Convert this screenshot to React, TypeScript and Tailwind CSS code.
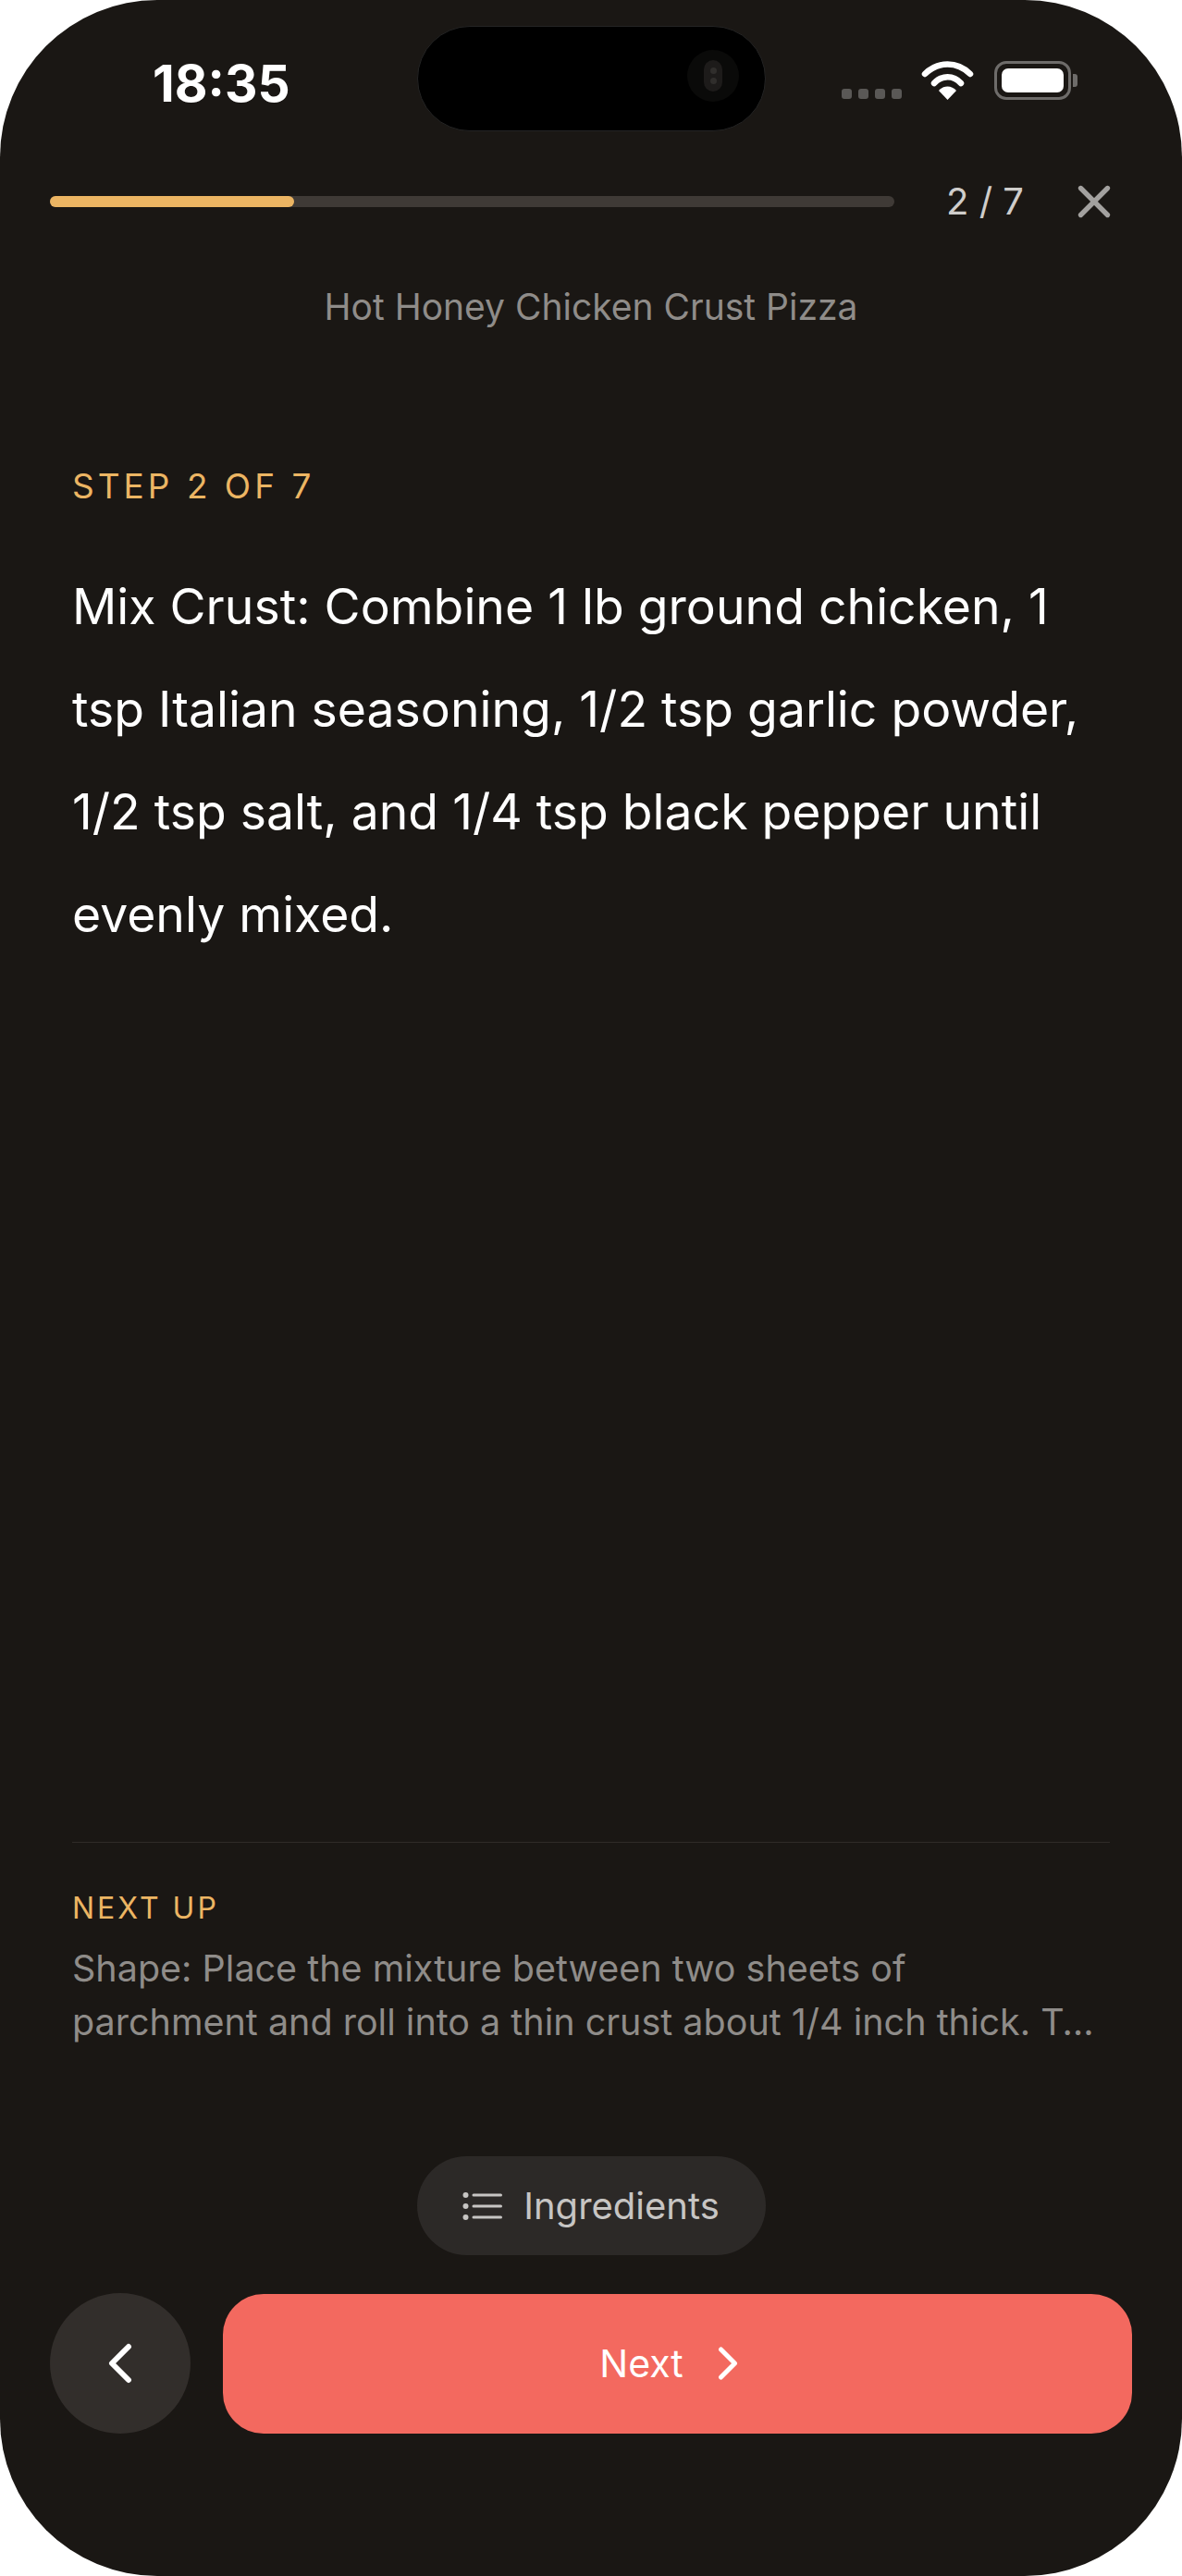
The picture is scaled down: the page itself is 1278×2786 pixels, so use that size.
import { ChevronLeft, ChevronRight, X } from "lucide-react";

const font = "font-['Inter','Noto_Sans',sans-serif]";

function StatusIcons() {
  return (
    <div className="flex items-end">
      <div className="flex gap-[7px] mb-[1px]">
        {[0, 1, 2, 3].map((d) => (
          <div key={d} className="w-[11px] h-[11px] rounded-[3px] bg-[#5a5856]" />
        ))}
      </div>
      <svg className="ml-[21px]" width="57" height="42" viewBox="0 0 57 42" fill="none">
        <path d="M4 14 C18 0 39 0 53 14" stroke="#fff" strokeWidth="6.5" strokeLinecap="round" />
        <path d="M14 24 C22 15 35 15 43 24" stroke="#fff" strokeWidth="6.5" strokeLinecap="round" />
        <path d="M19 32 C24 26 33 26 38 32 L28.5 42 Z" fill="#fff" />
      </svg>
      <div className="ml-[22px] flex items-center">
        <div className="w-[83px] h-[42px] rounded-[13px] border-[3px] border-[#6e6c6a] p-[5px]">
          <div className="w-full h-full rounded-[7px] bg-white" />
        </div>
        <div className="w-[5px] h-[14px] rounded-r-[3px] bg-[#6e6c6a] ml-[2px]" />
      </div>
    </div>
  );
}

function ListIcon() {
  return (
    <svg width="43" height="32" viewBox="0 0 43 32" fill="none" stroke="currentColor" strokeWidth="3" strokeLinecap="round">
      <circle cx="3.5" cy="4" r="3" fill="currentColor" stroke="none" />
      <circle cx="3.5" cy="16" r="3" fill="currentColor" stroke="none" />
      <circle cx="3.5" cy="28" r="3" fill="currentColor" stroke="none" />
      <path d="M12 4H41.5M12 16H41.5M12 28H41.5" />
    </svg>
  );
}

export default function App() {
  return (
    <div className="bg-white w-[1278px] h-[2786px]">
      <div className={`relative flex flex-col w-full h-full rounded-[170px] overflow-hidden bg-[#1a1714] ${font}`}>
        {/* dynamic island */}
        <div className="absolute left-[451px] top-[28px] w-[377px] h-[114px] rounded-[57px] bg-black border border-[#242424]">
          <div className="absolute left-[291px] top-[25px] w-[56px] h-[56px] rounded-full bg-[#0a0a09] flex items-center justify-center">
            <div className="w-[20px] h-[34px] rounded-full bg-[#1d1b1a] flex flex-col items-center justify-center gap-[4px]">
              <div className="w-[7px] h-[7px] rounded-full bg-[#302e2c]" />
              <div className="w-[7px] h-[7px] rounded-full bg-[#302e2c]" />
            </div>
          </div>
        </div>

        <div className="flex justify-between items-start pt-[66px] pl-[165px] pr-[113px] h-[198px]">
          <div className="font-bold text-[55px] leading-[48px] text-white">18:35</div>
          <StatusIcons />
        </div>

        <div className="flex items-center pl-[54px] h-[40px]">
          <div className="w-[913px] h-[12px] shrink-0 rounded-full bg-[#3f3a36]">
            <div className="w-[264px] h-full rounded-full bg-[#ecb563]" />
          </div>
          <div className="ml-[56px] shrink-0 whitespace-nowrap text-[40px] leading-none text-[#cfcdcb]">2 / 7</div>
          <X className="ml-[47px] shrink-0 text-[#a3a19f]" size={58} strokeWidth={2.2} />
        </div>

        <div className="mt-[69px] text-center text-[39px] leading-[50px] text-[#8f8c89]">Hot Honey Chicken Crust Pizza</div>

        <div className="px-[78px] mt-[144px] flex-1 flex flex-col">
          <div className="text-[37px] leading-[50px] tracking-[4px] text-[#ecb563]">STEP 2 OF 7</div>
          <div className="mt-[49px] text-[53.5px] leading-[111px] text-white">
            Mix Crust: Combine 1 lb ground chicken, 1 tsp Italian seasoning, 1/2 tsp garlic powder, 1/2 tsp salt, and 1/4 tsp black pepper until evenly mixed.
          </div>
        </div>

        <div className="mx-[78px] border-t border-[#2f2b28] pt-[49px]">
          <div className="text-[32px] leading-[44px] tracking-[3px] text-[#ecb563]">NEXT UP</div>
          <div className="mt-[14px] text-[39.5px] leading-[58px] text-[#8f8c89]">
            <div>Shape: Place the mixture between two sheets of</div>
            <div className="truncate pr-[14px]">parchment and roll into a thin crust about 1/4 inch thick. Transfer to a baking sheet.</div>
          </div>
        </div>

        <div className="flex justify-center mt-[116px]">
          <div className="w-[377px] h-[107px] rounded-full bg-[#2c2927] flex items-center justify-center gap-[23px] text-[40px] text-[#c7c5c3]">
            <ListIcon />
            <span>Ingredients</span>
          </div>
        </div>

        <div className="flex items-center gap-[35px] px-[54px] mt-[41px] mb-[154px]">
          <div className="w-[152px] h-[152px] rounded-full bg-[#322e2b] flex items-center justify-center shrink-0">
            <ChevronLeft className="text-white" size={72} strokeWidth={2} />
          </div>
          <div className="flex-1 h-[151px] rounded-[44px] bg-[#f3695f] flex items-center justify-center gap-[18px] text-[41px] text-white">
            <span className="pt-[2px]">Next</span>
            <ChevronRight size={60} strokeWidth={2} />
          </div>
        </div>
      </div>
    </div>
  );
}
